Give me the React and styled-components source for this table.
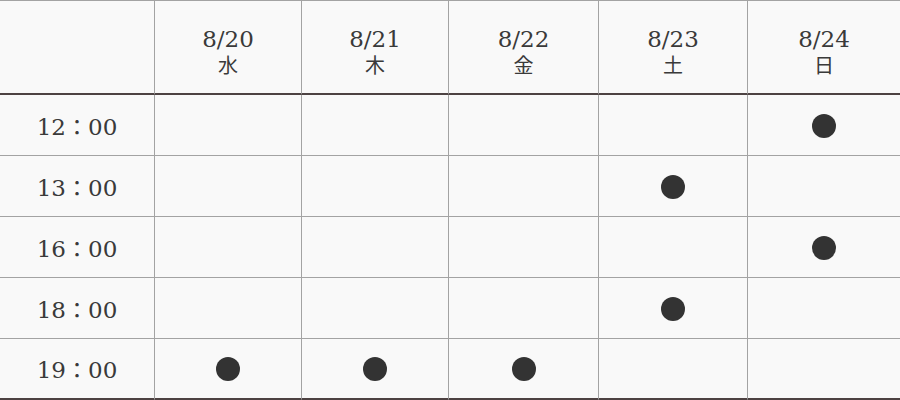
import React from "react";
import styled, { createGlobalStyle } from "styled-components";

const Global = createGlobalStyle`
  html, body { margin: 0; padding: 0; background: #f9f9f9; }
  body { font-family: "DejaVu Serif", "Noto Sans CJK JP", serif; color: #3a3a3a; }
`;

const Table = styled.div`
  display: grid;
  grid-template-columns: 154px 147px 147px 150px 149px 1fr;
  width: 900px;
  border-top: 1px solid #a3a3a3;
  background: #f9f9f9;
`;

const Cell = styled.div`
  display: flex;
  flex-direction: column;
  align-items: center;
  justify-content: center;
  box-sizing: border-box;
  height: ${(p) => (p.$head ? 94 : p.$last ? 62 : 61)}px;
  padding-top: ${(p) => (p.$head ? 10 : 1)}px;
  border-left: ${(p) => (p.$first ? "none" : "1px solid #a3a3a3")};
  border-bottom: ${(p) =>
    p.$head ? "2px solid #4d4242" : p.$last ? "3px solid #4d4242" : "1px solid #a3a3a3"};
`;

const DateText = styled.span`
  font-size: 23px;
  line-height: 26px;
`;

const DayText = styled.span`
  font-family: "Noto Sans CJK JP", sans-serif;
  font-size: 20px;
  line-height: 26px;
`;

const TimeText = styled.span`
  font-size: 23px;
  line-height: 28px;
`;

const Colon = styled.span`
  font-family: "Noto Sans CJK JP", sans-serif;
  font-size: 22px;
`;

const Dot = styled.span`
  width: 24px;
  height: 24px;
  border-radius: 50%;
  background: #333;
`;

const days = [
  ["8/20", "水"],
  ["8/21", "木"],
  ["8/22", "金"],
  ["8/23", "土"],
  ["8/24", "日"],
];

const rows = [
  ["12", [4]],
  ["13", [3]],
  ["16", [4]],
  ["18", [3]],
  ["19", [0, 1, 2]],
];

export default function App() {
  return (
    <>
      <Global />
      <Table>
        <Cell $head $first />
        {days.map(([d, w]) => (
          <Cell $head key={d}>
            <DateText>{d}</DateText>
            <DayText>{w}</DayText>
          </Cell>
        ))}
        {rows.map(([h, marks], ri) => {
          const last = ri === rows.length - 1;
          return (
            <React.Fragment key={h}>
              <Cell $first $last={last}>
                <TimeText>
                  {h}
                  <Colon>：</Colon>00
                </TimeText>
              </Cell>
              {days.map((_, ci) => (
                <Cell $last={last} key={ci}>
                  {marks.includes(ci) && <Dot />}
                </Cell>
              ))}
            </React.Fragment>
          );
        })}
      </Table>
    </>
  );
}
